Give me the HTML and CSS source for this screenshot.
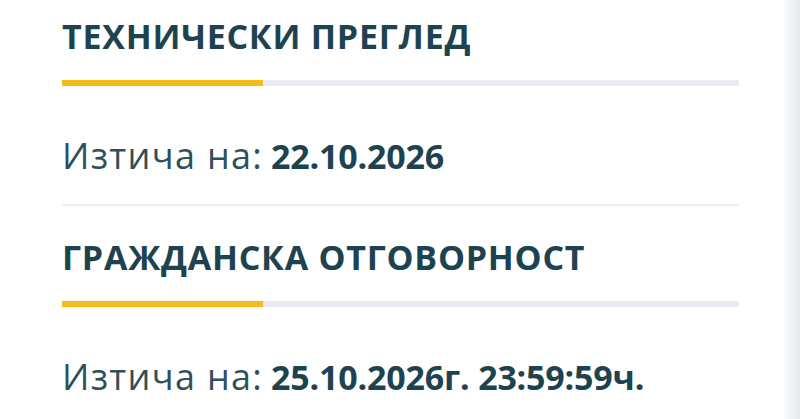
FILE: index.html
```html
<!DOCTYPE html>
<html lang="bg">
<head>
<meta charset="utf-8">
<link rel="stylesheet" href="styles.css">
</head>
<body>
<div class="page">
  <main class="content">
    <section class="block">
      <h2 class="title">ТЕХНИЧЕСКИ ПРЕГЛЕД</h2>
      <div class="progress"><div class="progress-fill"></div></div>
      <p class="expiry"><span class="label">Изтича на:</span><span class="value">22.10.2026</span></p>
    </section>
    <hr class="divider">
    <section class="block block-next">
      <h2 class="title">ГРАЖДАНСКА ОТГОВОРНОСТ</h2>
      <div class="progress"><div class="progress-fill"></div></div>
      <p class="expiry"><span class="label">Изтича на:</span><span class="value">25.10.2026г. 23:59:59ч.</span></p>
    </section>
  </main>
  <div class="edge"></div>
</div>
</body>
</html>
```

FILE: styles.css
```css
* { box-sizing: border-box; }
html, body { margin: 0; padding: 0; background: #ffffff; }
body { font-family: "Open Sans", "Liberation Sans", sans-serif; color: #234651; }
.page { display: flex; width: 800px; height: 419px; overflow: hidden; }
.content { flex: 1; padding: 0 0 0 62px; }
.block { width: 677px; display: flex; flex-direction: column; }
.block-next { margin-top: 15px; }
.title {
  margin: 0;
  padding-top: 12px;
  font-size: 34px;
  line-height: 48px;
  font-weight: 700;
  color: #1e4350;
  letter-spacing: 0.75px;
}
.progress { margin-top: 20px; height: 6px; background: #e8ebf3; }
.progress-fill { width: 201px; height: 100%; background: #f5bb1c; }
.expiry { margin: 46px 0 0; font-size: 34px; line-height: 48px; display: flex; align-items: baseline; gap: 8px; }
.label { font-size: 36px; font-weight: 400; color: #2f505a; letter-spacing: 1.3px; }
.value { font-weight: 700; color: #1e4350; letter-spacing: -0.2px; }
.divider { margin: 24px 0 0; width: 677px; border: 0; height: 2px; background: #eeeeee; }
.edge { width: 18px; background: linear-gradient(to right, #ffffff, #eef0f3 60%, #e6e9ee); }
```
